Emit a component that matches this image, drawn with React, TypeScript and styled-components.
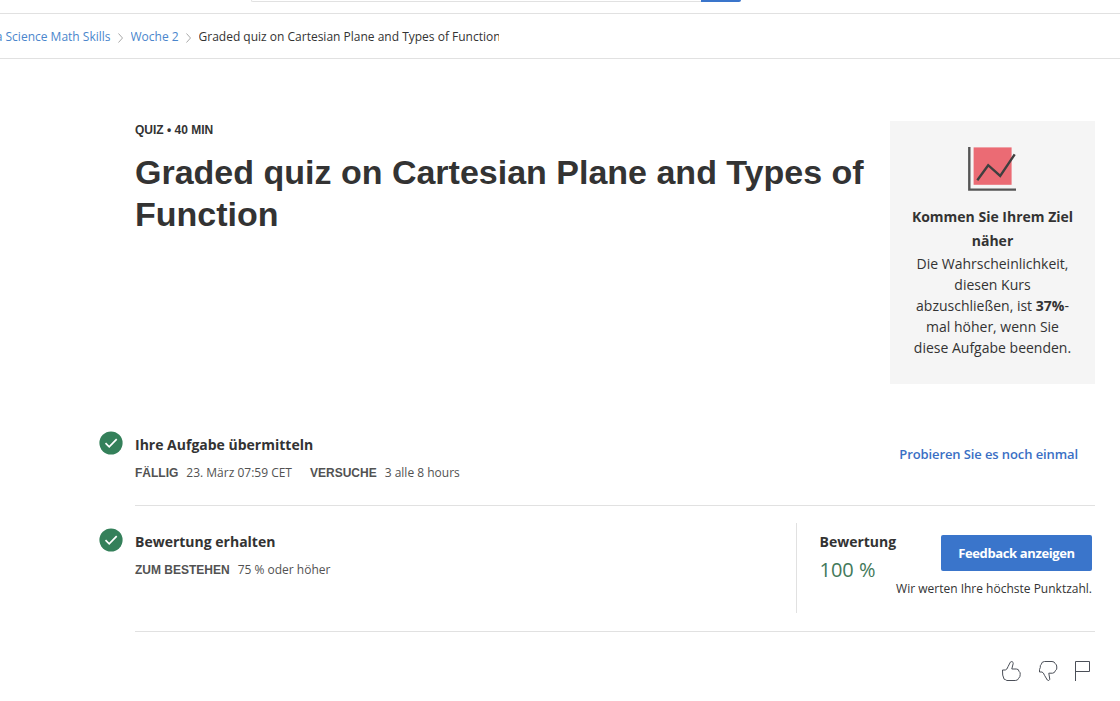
import React from 'react';
import styled, { createGlobalStyle } from 'styled-components';

const Global = createGlobalStyle`
  * { box-sizing: border-box; }
  html, body { margin: 0; padding: 0; background: #fff; overflow: hidden; }
  body { font-family: 'Open Sans', sans-serif; color: #333; }
  h1, h2, h3, p { margin: 0; }
`;

const Page = styled.div`
  width: 1120px;
  height: 701px;
  overflow: hidden;
  background: #fff;
`;

const TopBar = styled.header`
  height: 14px;
  padding-left: 251px;
  display: flex;
  align-items: flex-start;
  border-bottom: 1px solid #e1e1e1;
`;

const SearchField = styled.div`
  width: 450px;
  height: 2px;
  border: 1px solid #e1e1e1;
  border-width: 0 0 1px 1px;
  border-radius: 0 0 0 2px;
`;

const SearchButton = styled.div`
  width: 40px;
  height: 2px;
  background: #3a75cb;
  border-radius: 0 0 2px 0;
`;

const Breadcrumbs = styled.nav`
  height: 45px;
  padding-top: 2px;
  border-bottom: 1px solid #e1e1e1;
  display: flex;
  align-items: center;
  font-size: 12px;
  line-height: 18px;
  white-space: nowrap;
`;

const Crumb = styled.a<{ $width: number; $end?: boolean }>`
  display: flex;
  justify-content: ${(p) => (p.$end ? 'flex-end' : 'flex-start')};
  flex: none;
  width: ${(p) => p.$width}px;
  overflow: hidden;
  color: #4a86cc;
`;

const CurrentCrumb = styled(Crumb)`
  color: #333;
`;

const Separator = styled.svg`
  flex: none;
  width: 20px;
  height: 12px;
  margin-top: 2px;
  fill: none;
  stroke: #aaa;
`;

const Main = styled.main`
  padding: 62px 25px 0 99px;
`;

const Hero = styled.section`
  display: flex;
  justify-content: space-between;
  align-items: flex-start;
  padding-left: 36px;
  margin-bottom: 25px;
`;

const Heading = styled.div`
  width: 740px;
  font-family: 'Liberation Sans', Arial, sans-serif;
`;

const Kind = styled.p`
  font-size: 12px;
  line-height: 18px;
  font-weight: 700;
`;

const Title = styled.h1`
  margin-top: 12px;
  font-size: 34px;
  line-height: 42px;
  font-weight: 700;
`;

const GoalCard = styled.aside`
  width: 205px;
  height: 263px;
  padding: 26px 18px 0;
  background: #f5f5f5;
  text-align: center;
`;

const ChartIcon = styled.svg`
  display: block;
  margin: 0 0 14px 60px;
`;

const GoalTitle = styled.h3`
  font-size: 14px;
  line-height: 24px;
  font-weight: 700;
`;

const GoalText = styled.p`
  font-size: 14px;
  line-height: 21px;
`;

const Step = styled.section<{ $height: number }>`
  display: flex;
  height: ${(p) => p.$height}px;
`;

const StatusIcon = styled.svg`
  flex: none;
  width: 24px;
  height: 24px;
  margin: 22px 12px 0 0;
`;

const StepBody = styled.div`
  flex: 1;
  display: flex;
  justify-content: space-between;
  border-bottom: 1px solid #e1e1e1;
`;

const StepInfo = styled.div`
  padding-top: 25px;
`;

const StepTitle = styled.h2`
  font-size: 14px;
  line-height: 22px;
  font-weight: 700;
  white-space: nowrap;
`;

const Facts = styled.div`
  display: flex;
  gap: 18px;
  margin-top: 8px;
  font-size: 12px;
  line-height: 18px;
`;

const Fact = styled.div`
  display: flex;
  gap: 8px;
  color: #525252;
  white-space: nowrap;
`;

const FactLabel = styled.span`
  font-family: 'Liberation Sans', Arial, sans-serif;
  font-weight: 700;
`;

const TextButton = styled.button`
  align-self: flex-start;
  margin: 35px 17px 0 0;
  padding: 0;
  border: 0;
  background: none;
  color: #3a6fc4;
  font: 600 13px/20px 'Open Sans', sans-serif;
  letter-spacing: -0.1px;
  white-space: nowrap;
`;

const GradePanel = styled.div`
  display: flex;
  width: 299px;
  height: 90px;
  margin-top: 17px;
  padding-left: 22.5px;
  border-left: 1px solid #e1e1e1;
`;

const Grade = styled.div`
  width: 76px;
  padding-top: 8px;
`;

const GradeValue = styled.p`
  margin-top: 2px;
  font-size: 20px;
  line-height: 30px;
  color: #43795a;
  white-space: nowrap;
`;

const GradeActions = styled.div`
  flex: 1;
  display: flex;
  flex-direction: column;
  align-items: flex-end;
  padding: 12px 3px 0 0;
`;

const PrimaryButton = styled.button`
  width: 151px;
  height: 36px;
  padding: 0;
  border: 0;
  border-radius: 2px;
  background: #3a75cb;
  color: #fff;
  font: 700 13px/20px 'Open Sans', sans-serif;
  letter-spacing: -0.37px;
`;

const GradeNote = styled.p`
  margin-top: 9px;
  font-size: 12px;
  line-height: 18px;
  white-space: nowrap;
`;

const Reactions = styled.footer`
  display: flex;
  justify-content: flex-end;
  gap: 14px;
  padding: 28px 1px 0 0;
`;

const ReactionIcon = styled.svg`
  width: 22px;
  height: 24px;
  fill: none;
  stroke: #4b4f58;
  stroke-width: 1;
  stroke-linejoin: round;
`;

const Chevron = () => (
  <Separator viewBox="0 0 20 12">
    <path d="M7.5 1.5 11.5 6 7.5 10.5" />
  </Separator>
);

const Done = () => (
  <StatusIcon viewBox="0 0 24 24">
    <circle cx="12" cy="12" r="11.6" fill="#34805a" />
    <path d="M6.5 12.2 10.2 15.8 17.7 8.1" fill="none" stroke="#fff" strokeWidth="1.7" />
  </StatusIcon>
);

export default function App() {
  return (
    <Page>
      <Global />
      <TopBar>
        <SearchField />
        <SearchButton />
      </TopBar>
      <Breadcrumbs>
        <Crumb $width={110.5} $end>Data Science Math Skills</Crumb>
        <Chevron />
        <Crumb $width={48}>Woche 2</Crumb>
        <Chevron />
        <CurrentCrumb as="span" $width={300}>Graded quiz on Cartesian Plane and Types of Function</CurrentCrumb>
      </Breadcrumbs>
      <Main>
        <Hero>
          <Heading>
            <Kind>QUIZ • 40 MIN</Kind>
            <Title>Graded quiz on Cartesian Plane and Types of Function</Title>
          </Heading>
          <GoalCard>
            <ChartIcon width="48" height="44" viewBox="0 0 48 44">
              <rect x="5.6" y="0.4" width="38" height="37.4" fill="#eb6b74" />
              <path d="M1.3 0V42.6H48" fill="none" stroke="#555" strokeWidth="2.4" />
              <path d="M9.3 33.2 20.2 18.2 32.2 29 46.7 7.3" fill="none" stroke="#3f3f3f" strokeWidth="2.4" />
            </ChartIcon>
            <GoalTitle>Kommen Sie Ihrem Ziel näher</GoalTitle>
            <GoalText>
              Die Wahrscheinlichkeit, diesen Kurs abzuschließen, ist <b>37%</b>-<br />
              mal höher, wenn Sie diese Aufgabe beenden.
            </GoalText>
          </GoalCard>
        </Hero>
        <Step $height={97}>
          <Done />
          <StepBody>
            <StepInfo>
              <StepTitle>Ihre Aufgabe übermitteln</StepTitle>
              <Facts>
                <Fact><FactLabel>FÄLLIG</FactLabel>23. März 07:59 CET</Fact>
                <Fact><FactLabel>VERSUCHE</FactLabel>3 alle 8 hours</Fact>
              </Facts>
            </StepInfo>
            <TextButton>Probieren Sie es noch einmal</TextButton>
          </StepBody>
        </Step>
        <Step $height={126}>
          <Done />
          <StepBody>
            <StepInfo>
              <StepTitle>Bewertung erhalten</StepTitle>
              <Facts>
                <Fact><FactLabel>ZUM BESTEHEN</FactLabel>75 % oder höher</Fact>
              </Facts>
            </StepInfo>
            <GradePanel>
              <Grade>
                <StepTitle as="h3">Bewertung</StepTitle>
                <GradeValue>100 %</GradeValue>
              </Grade>
              <GradeActions>
                <PrimaryButton>Feedback anzeigen</PrimaryButton>
                <GradeNote>Wir werten Ihre höchste Punktzahl.</GradeNote>
              </GradeActions>
            </GradePanel>
          </StepBody>
        </Step>
        <Reactions>
          <ReactionIcon viewBox="0 0 22 24">
            <path d="M2.5 10H5.3Q7.1 9.7 8.1 6.5L10.3 2.2C11.3 0.9 13.6 1.8 13.2 3.5L11.8 9H16.3Q18.8 9 19 11.3 20.6 12.5 20.2 14.5 20.3 17 18.6 18.3 18 20.5 15.3 20.5H6.8Q5.6 19.5 4.1 19.2 2.1 15.5 2.5 10Z" />
          </ReactionIcon>
          <ReactionIcon viewBox="0 0 22 24">
            <path d="M3.5 12H6Q7.5 12.5 8.5 15.3L11.3 20Q12.8 21.5 13.8 19.3L12.8 13.2H16.5Q18.8 13 19.3 10.8 21.3 9.5 20.8 7 20.8 4.5 19.3 3.7 18.5 1.5 16 1.5H8.5Q5.5 1.7 5.3 4.3 3.8 5.5 4.3 7.5 3.2 9 3.5 12Z" />
          </ReactionIcon>
          <ReactionIcon viewBox="0 0 22 24">
            <path d="M3.5 21V1.5H17.5V11.5H3.5" />
          </ReactionIcon>
        </Reactions>
      </Main>
    </Page>
  );
}
